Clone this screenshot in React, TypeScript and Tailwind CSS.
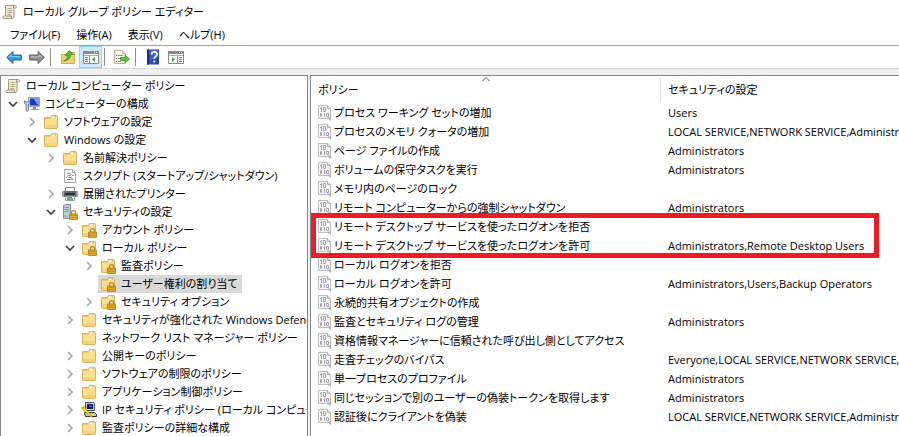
import React from 'react';

// ─── Types ────────────────────────────────────────────────────────────────────

type IconName = 'scroll' | 'computer' | 'folder' | 'script' | 'printer' | 'server' | 'lockedFolder' | 'ipsec';

interface TreeNode {
  label: string;
  level: number;
  icon: IconName;
  state?: 'open' | 'closed';
  selected?: boolean;
}

interface Policy {
  name: string;
  setting: string;
}

// ─── Data ─────────────────────────────────────────────────────────────────────

const menus = ['ファイル(F)', '操作(A)', '表示(V)', 'ヘルプ(H)'];

const nodes: TreeNode[] = [
  { label: 'ローカル コンピューター ポリシー', level: 0, icon: 'scroll' },
  { label: 'コンピューターの構成', level: 1, icon: 'computer', state: 'open' },
  { label: 'ソフトウェアの設定', level: 2, icon: 'folder', state: 'closed' },
  { label: 'Windows の設定', level: 2, icon: 'folder', state: 'open' },
  { label: '名前解決ポリシー', level: 3, icon: 'folder', state: 'closed' },
  { label: 'スクリプト (スタートアップ/シャットダウン)', level: 3, icon: 'script' },
  { label: '展開されたプリンター', level: 3, icon: 'printer', state: 'closed' },
  { label: 'セキュリティの設定', level: 3, icon: 'server', state: 'open' },
  { label: 'アカウント ポリシー', level: 4, icon: 'lockedFolder', state: 'closed' },
  { label: 'ローカル ポリシー', level: 4, icon: 'lockedFolder', state: 'open' },
  { label: '監査ポリシー', level: 5, icon: 'lockedFolder', state: 'closed' },
  { label: 'ユーザー権利の割り当て', level: 5, icon: 'lockedFolder', selected: true },
  { label: 'セキュリティ オプション', level: 5, icon: 'lockedFolder', state: 'closed' },
  { label: 'セキュリティが強化された Windows Defender', level: 4, icon: 'folder', state: 'closed' },
  { label: 'ネットワーク リスト マネージャー ポリシー', level: 4, icon: 'folder' },
  { label: '公開キーのポリシー', level: 4, icon: 'folder', state: 'closed' },
  { label: 'ソフトウェアの制限のポリシー', level: 4, icon: 'folder', state: 'closed' },
  { label: 'アプリケーション制御ポリシー', level: 4, icon: 'folder', state: 'closed' },
  { label: 'IP セキュリティ ポリシー (ローカル コンピューター)', level: 4, icon: 'ipsec', state: 'closed' },
  { label: '監査ポリシーの詳細な構成', level: 4, icon: 'folder', state: 'closed' },
];

const policies: Policy[] = [
  { name: 'プロセス ワーキング セットの増加', setting: 'Users' },
  { name: 'プロセスのメモリ クォータの増加', setting: 'LOCAL SERVICE,NETWORK SERVICE,Administrators' },
  { name: 'ページ ファイルの作成', setting: 'Administrators' },
  { name: 'ボリュームの保守タスクを実行', setting: 'Administrators' },
  { name: 'メモリ内のページのロック', setting: '' },
  { name: 'リモート コンピューターからの強制シャットダウン', setting: 'Administrators' },
  { name: 'リモート デスクトップ サービスを使ったログオンを拒否', setting: '' },
  { name: 'リモート デスクトップ サービスを使ったログオンを許可', setting: 'Administrators,Remote Desktop Users' },
  { name: 'ローカル ログオンを拒否', setting: '' },
  { name: 'ローカル ログオンを許可', setting: 'Administrators,Users,Backup Operators' },
  { name: '永続的共有オブジェクトの作成', setting: '' },
  { name: '監査とセキュリティ ログの管理', setting: 'Administrators' },
  { name: '資格情報マネージャーに信頼された呼び出し側としてアクセス', setting: '' },
  { name: '走査チェックのバイパス', setting: 'Everyone,LOCAL SERVICE,NETWORK SERVICE,Administrators' },
  { name: '単一プロセスのプロファイル', setting: 'Administrators' },
  { name: '同じセッションで別のユーザーの偽装トークンを取得します', setting: 'Administrators' },
  { name: '認証後にクライアントを偽装', setting: 'LOCAL SERVICE,NETWORK SERVICE,Administrators' },
];

const indents = ['pl-[3px]', 'pl-[3px]', 'pl-[22px]', 'pl-[41px]', 'pl-[60px]', 'pl-[79px]'];

// ─── Icons ────────────────────────────────────────────────────────────────────

function Svg({ children }: { children: React.ReactNode }) {
  return (
    <svg viewBox="0 0 16 16" className="h-4 w-4 shrink-0" aria-hidden="true">
      {children}
    </svg>
  );
}

function ScrollIcon() {
  return (
    <Svg>
      <path d="M4 1.500h9.500c1.400 0 1.600 2.500 0 2.500H12v8.500c0 1.500-.8 2-1.800 2H2c-1.500 0-1.800-2.500 0-2.500h1.500V3c0-.9-.3-1.500.5-1.500z" fill="#f4ecd2" stroke="#a39a7e" />
      <path d="M11.500 4V2.500c0-.7.6-1 1.200-1M3.500 12h6c-.5 1 .1 2.300 1 2.400" fill="none" stroke="#8f866c" />
      <path d="M5.500 4.500h4.500M5.500 6.500h4.500M5.500 8.500h4.500M5.500 10.500h3" stroke="#b3aa8e" />
    </Svg>
  );
}

function FolderShape() {
  return (
    <>
      <path d="M1.500 3.500h6l1-2h5c.6 0 1 .4 1 1v11c0 .6-.4 1-1 1h-11c-.6 0-1-.4-1-1z" fill="#eec96b" stroke="#dcb456" />
      <path d="M9 2.500h4.500v2H8z" fill="#fff" />
      <path d="M11.500 2.500H13v1h-1.500z" fill="#58aee0" />
      <path d="M2 5h7l1-1h4v9.500H2z" fill="#fbdf91" />
      <path d="M2 11h12v2.500H2z" fill="#f5d27c" />
    </>
  );
}

function LockShape() {
  return (
    <>
      <path d="M9.500 10V8.500c0-2.600 4-2.600 4 0V10" fill="none" stroke="#a98535" strokeWidth="1.200" />
      <path d="M7.500 10h8v5.500h-8z" fill="#e3aa2c" stroke="#a87c22" strokeWidth=".8" />
      <path d="M8 11.500h7M8 13.500h7" stroke="#bd8a22" strokeWidth=".8" />
    </>
  );
}

// Grey page with binary digits
function PolicyIcon() {
  return (
    <svg viewBox="0 0 14 16" className="h-4 w-3.5 shrink-0" fill="none" aria-hidden="true">
      <path d="M.5.500h9l3 3v10H.5z" fill="#f8f8f8" stroke="#bdbdbd" />
      <path d="M9.500.5v3h3" fill="#e2e2e2" stroke="#b0b0b0" />
      <g stroke="#a7a1ae">
        <path d="M3.500 2v5M2 3.500h1" />
        <path d="M5.500 2.500h2v4h-2z" />
        <path d="M2.500 8.500h1v3h-1z" />
        <path d="M6.500 8v4" />
        <path d="M8.500 8.500h2v3h-2z" />
      </g>
      <path d="M9 13l4 3v-4z" fill="#b0b0b0" />
    </svg>
  );
}

function NodeIcon({ name }: { name: IconName }) {
  switch (name) {
    case 'scroll':
      return <ScrollIcon />;
    case 'folder':
      return <Svg><FolderShape /></Svg>;
    case 'lockedFolder':
      return <Svg><FolderShape /><LockShape /></Svg>;
    case 'computer':
      return (
        <Svg>
          <path d="M4.500 1.500h11v9h-11z" fill="#dfe3ea" stroke="#9ba2ae" />
          <path d="M6 2.500h9v7H6z" fill="#1736c9" />
          <path d="M10 2.500h5v6.500c-2.500-1-4.500-3.500-5-6.500z" fill="#7d9df5" />
          <path d="M9 11h3v2H9z" fill="#8d939d" />
          <path d="M7 13.500h7.500" stroke="#8a909b" />
          <path d="M.5 4.500v3l1.500 1V14c0 1.500 2.500 1.500 2.500 0V8.500l1.500-1v-3L4.500 6H2z" fill="#b8c9d6" stroke="#617b8d" strokeWidth=".8" />
        </Svg>
      );
    case 'script':
      return (
        <Svg>
          <path d="M2.500 1.500h8l3 3v10h-11z" fill="#fff" stroke="#a5a5a5" />
          <path d="M10.500 1.500v3h3" fill="none" stroke="#a5a5a5" />
          <path d="M5 5.500h3c1.500 0 1.500 2 0 2H6.500c-1.500 0-1.500 2 0 2H9c1.500 0 1.500 2 0 2H5M10 7.500h2M4 9.500h1M10 11.500h1.500" fill="none" stroke="#888" strokeWidth=".9" />
        </Svg>
      );
    case 'printer':
      return (
        <Svg>
          <path d="M3.500 1.500h9v4h-9z" fill="#f8f8f8" stroke="#888" />
          <path d="M0 5h16v6H0z" fill="#666b70" />
          <path d="M0 5h2v6H0zM14 5h2v6h-2z" fill="#9ba0a5" />
          <path d="M3 7h10v2H3z" fill="#2e3439" />
          <path d="M3.500 10.500h9v4h-9z" fill="#fff" stroke="#9a9fa4" />
          <path d="M5 11h5v3H5z" fill="#4aa3dc" />
          <path d="M7 12h4v2H7z" fill="#74ba6a" />
        </Svg>
      );
    case 'server':
      return (
        <Svg>
          <path d="M1.500 1.500l2-1h5v13l-2 1h-5z" fill="#bccbd7" stroke="#8294a2" />
          <path d="M2.500 3.500h4M2.500 5.500h4M2.500 7.500h4" stroke="#7f93a1" />
          <path d="M2.500 12h2" stroke="#4ba73b" />
          <LockShape />
        </Svg>
      );
    case 'ipsec':
      return (
        <Svg>
          <path d="M4.500.5h8l1 1v7h-9z" fill="#d4d4cc" stroke="#4b4b4b" />
          <path d="M6 2h6v5H6z" fill="#0a1a68" />
          <path d="M8 3h3v2H8z" fill="#295de4" />
          <path d="M3.500 10.500h10l2 2v2h-11z" fill="#c9c9c2" stroke="#333" />
          <path d="M1 5l3 1 6 7 1 2-2-.5-7-7z" fill="#f4e800" stroke="#8b8200" strokeWidth=".6" />
          <path d="M0 6h3M3 3v3" stroke="#d7c900" />
        </Svg>
      );
  }
}

function BackIcon() {
  return (
    <Svg>
      <path d="M.7 8.500L7 2.500V6h8.300v5H7v3.500z" fill="#2e9be6" stroke="#1268ad" strokeLinejoin="round" />
      <path d="M2.500 8.200L6 5v2h8.300v1.200z" fill="#7bcbfa" />
    </Svg>
  );
}

function ForwardIcon() {
  return (
    <Svg>
      <path d="M15.300 8.500L9 2.500V6H.7v5H9v3.500z" fill="#8e8e8e" stroke="#606060" strokeLinejoin="round" />
      <path d="M13.500 8.200L10 5v2H1.700v1.200z" fill="#b5b5b5" />
    </Svg>
  );
}

function UpFolderIcon() {
  return (
    <Svg>
      <path d="M1.500 5.500h6l1-2h6v11h-13z" fill="#f3d17a" stroke="#d3ad52" />
      <path d="M9.500 4.500h4" stroke="#fff" />
      <path d="M3.500 12c3-1.200 4-3 4-5.500H5L9 1.500l4.500 4h-3c0 4-2.500 6-7 6.500z" fill="#4cc02f" stroke="#2f8a1d" strokeWidth=".7" />
    </Svg>
  );
}

// The console tree sits left of the arrow, the action pane right of it
function PaneIcon({ side }: { side: 'left' | 'right' }) {
  return (
    <Svg>
      <path d="M.5 2.500h15v12H.5z" fill="#fff" stroke="#858b91" />
      <path d="M0 2h16v3H0z" fill="#858b91" />
      <path d="M11 3.500h1M13 3.500h1" stroke="#fff" />
      <path d="M1 6.500h14" stroke="#a9adb1" />
      {side === 'left' ? (
        <>
          <path d="M6.500 7v7.500" stroke="#858b91" />
          <path d="M2 8.500h3M2 10.500h3M2 12.500h3" stroke="#477fae" />
          <path d="M12 8v5l-3-2.500z" fill="#33a629" />
        </>
      ) : (
        <>
          <path d="M9.500 7v7.500" stroke="#858b91" />
          <path d="M11 8.500h3M11 10.500h3M11 12.500h3" stroke="#477fae" />
          <path d="M4 8v5l3-2.500z" fill="#33a629" />
        </>
      )}
    </Svg>
  );
}

function ExportIcon() {
  return (
    <Svg>
      <path d="M.5 1.500h8l3 3v10H.5z" fill="#fbf7e4" stroke="#b5b09b" />
      <path d="M8.500 1.500v3h3" fill="#eee4bd" stroke="#b5b09b" />
      <path d="M2 6.500h1M2 9.500h1M2 12.500h1" stroke="#555" />
      <path d="M4 6.500h5M4 9.500h3M4 12.500h3" stroke="#8b8baa" />
      <path d="M6.500 8.500h4.500V6l4.600 4-4.600 4v-2.500H6.500z" fill="#54c542" stroke="#309022" strokeWidth=".7" />
    </Svg>
  );
}

function HelpIcon() {
  return (
    <Svg>
      <path d="M2 .5h12v15H2z" fill="#2849b5" />
      <path d="M2 .5h2v15H2z" fill="#182e82" />
      <path d="M5 1h8.500v7L5 12z" fill="#3b64d1" />
      <path d="M6.500 5.500C6.500 2 12 2 12 5.300c0 2.200-2.700 2.200-2.700 4.700M9.300 11.500v2" fill="none" stroke="#fff" strokeWidth="1.700" />
    </Svg>
  );
}

// ─── Component ────────────────────────────────────────────────────────────────

export default function App() {
  return (
    <div className="flex h-screen cursor-default flex-col overflow-hidden bg-white font-['Open_Sans','Noto_Sans_CJK_JP',sans-serif] text-[11px] leading-[18px] text-black [font-feature-settings:'palt']">
      <header className="flex h-6 shrink-0 items-center gap-[5px] pl-0.5">
        <ScrollIcon />
        <h1>ローカル グループ ポリシー エディター</h1>
      </header>

      <nav className="flex h-[21px] shrink-0 items-center gap-4 pl-2.5" aria-label="メニュー">
        {menus.map((menu) => (
          <button key={menu} type="button">{menu}</button>
        ))}
      </nav>

      {/* ── Toolbar ── */}
      <div className="flex h-6 shrink-0 items-center border-y border-t-[#a0a0a0] border-b-[#d5d5d5] pl-0.5">
        <ToolButton label="戻る"><BackIcon /></ToolButton>
        <ToolButton label="進む"><ForwardIcon /></ToolButton>
        <Separator />
        <ToolButton label="1 つ上のレベルへ"><UpFolderIcon /></ToolButton>
        <ToolButton label="コンソール ツリーの表示" active><PaneIcon side="left" /></ToolButton>
        <Separator />
        <ToolButton label="一覧のエクスポート"><ExportIcon /></ToolButton>
        <Separator />
        <ToolButton label="ヘルプ"><HelpIcon /></ToolButton>
        <ToolButton label="操作ウィンドウの表示"><PaneIcon side="right" /></ToolButton>
      </div>

      <main className="flex min-h-0 flex-1 gap-0.5 bg-[#f0f0f0] pt-1.5">
        <PolicyTree />
        <PolicyList />
      </main>
    </div>
  );
}

// ─── Toolbar parts ────────────────────────────────────────────────────────────

function ToolButton({ label, active, children }: { label: string; active?: boolean; children: React.ReactNode }) {
  return (
    <button
      type="button"
      aria-label={label}
      aria-pressed={active}
      className={`flex h-[22px] w-[23px] items-center justify-center ${active ? 'border border-[#99d1ff] bg-[#cce8ff]' : ''}`}
    >
      {children}
    </button>
  );
}

function Separator() {
  return <span className="mr-[5px] ml-0.5 h-[18px] w-px bg-[#8c8c8c]" />;
}

// ─── Console tree ─────────────────────────────────────────────────────────────

function PolicyTree() {
  return (
    <section className="w-[308px] shrink-0 overflow-hidden border border-b-0 border-[#828790] bg-white pt-px" aria-label="コンソール ツリー">
      <ul>
        {nodes.map((node) => (
          <li key={node.label} className={`flex h-[18px] items-center whitespace-nowrap ${indents[node.level]}`}>
            {node.level > 0 && (
              <span className="flex w-[18px] shrink-0 items-center justify-center">
                {node.state && <Chevron open={node.state === 'open'} label={node.label} />}
              </span>
            )}
            <span className={`flex h-[18px] items-center gap-[5px] pr-1 ${node.level > 0 ? 'pl-0.5' : 'pl-px'} ${node.selected ? 'bg-[#d9d9d9]' : ''}`}>
              <NodeIcon name={node.icon} />
              {node.label}
            </span>
          </li>
        ))}
      </ul>
    </section>
  );
}

function Chevron({ open, label }: { open: boolean; label: string }) {
  return (
    <button type="button" aria-label={label} aria-expanded={open}>
      <svg viewBox="0 0 10 10" className="h-2.5 w-2.5" fill="none" strokeWidth="1.700" aria-hidden="true">
        {open ? <path d="M1 3l4 4 4-4" stroke="#404040" /> : <path d="M3 1l4 4-4 4" stroke="#a6a6a6" />}
      </svg>
    </button>
  );
}

// ─── Policy list ──────────────────────────────────────────────────────────────

function PolicyList() {
  return (
    <section className="relative min-w-0 flex-1 overflow-hidden border-t border-l border-[#828790] bg-white" aria-label="ポリシー">
      <table className="w-full table-fixed border-collapse text-left whitespace-nowrap">
        <colgroup>
          <col className="w-[350px]" />
          <col />
        </colgroup>
        <thead>
          <tr className="h-[27px]">
            <th className="relative p-0 pl-[7px] font-normal">
              ポリシー
              <svg viewBox="0 0 10 6" className="absolute top-0 left-1/2 h-1.5 w-2.5 -translate-x-1/2" fill="none" stroke="#555" aria-hidden="true">
                <path d="M1.500 5L5 1.500 8.500 5" />
              </svg>
              <span className="absolute top-0.5 right-0 h-6 w-px bg-[#e0e0e0]" />
            </th>
            <th className="p-0 pl-[7px] font-normal">セキュリティの設定</th>
          </tr>
        </thead>
        <tbody>
          {policies.map((policy) => (
            <tr key={policy.name} className="h-[19px]">
              <td className="p-0 pl-[7px]">
                <span className="flex items-center gap-0.5">
                  <PolicyIcon />
                  {policy.name}
                </span>
              </td>
              <td className="p-0 pl-[7px]">{policy.setting}</td>
            </tr>
          ))}
        </tbody>
      </table>
      {/* Red frame over the two remote desktop rows */}
      <div className="pointer-events-none absolute top-[137px] right-5 left-0 h-[45px] border-5 border-[#ed1c24]" />
    </section>
  );
}
